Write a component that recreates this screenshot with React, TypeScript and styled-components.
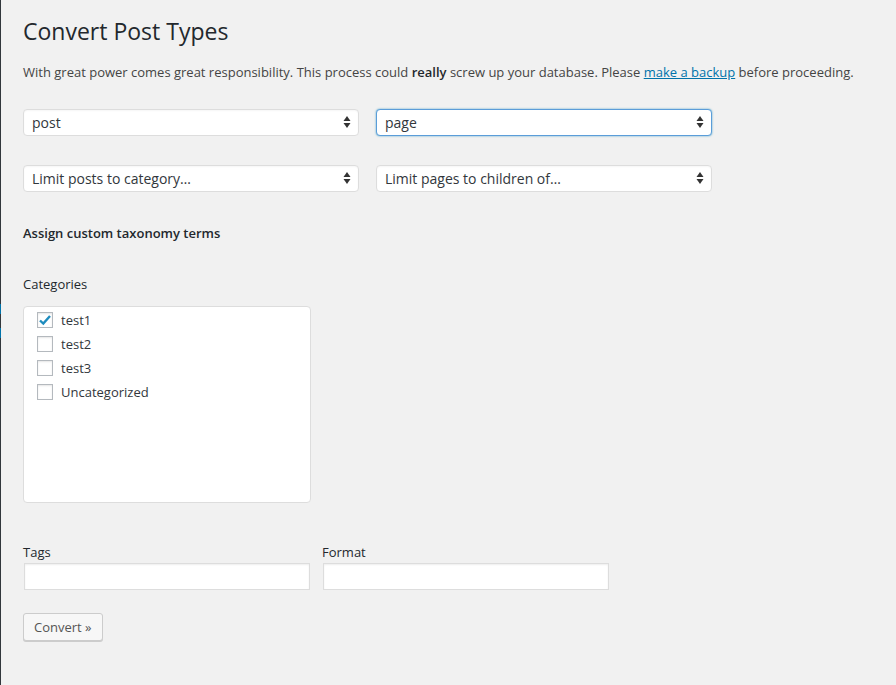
import React from "react";
import styled, { createGlobalStyle } from "styled-components";

const Global = createGlobalStyle`
  html, body { margin: 0; padding: 0; background: #f1f1f1; }
  body { font-family: "Open Sans", "Noto Sans", sans-serif; font-size: 13px; color: #444; }
`;

const Page = styled.div`
  display: flex;
  min-height: 685px;
`;

const Edge = styled.div`
  width: 1px;
  flex: none;
  background: linear-gradient(
    to bottom,
    #32373c 0,
    #32373c 304px,
    #0073aa 304px,
    #0073aa 314px,
    #32373c 314px,
    #32373c 328px,
    #0073aa 328px,
    #0073aa 338px,
    #32373c 338px
  );
`;

const Main = styled.div`
  flex: 1;
  padding: 0 0 0 22px;
`;

const Title = styled.h1`
  margin: 0;
  padding: 17px 0 0;
  font-size: 23px;
  font-weight: 400;
  line-height: 29px;
  color: #23282d;
`;

const Intro = styled.p`
  margin: 17px 0 0;
  font-size: 13px;
  line-height: 1.5;
  color: #444;
  strong { font-weight: 600; color: #23282d; }
  a { color: #0073aa; text-decoration: underline; }
`;

const SelectRow = styled.div<{ $top: number }>`
  display: flex;
  gap: 17px;
  margin-top: ${(p) => p.$top}px;
`;

const SelectBox = styled.div<{ $focus?: boolean }>`
  box-sizing: border-box;
  width: 336px;
  height: 27px;
  background: #fff;
  border: 1px solid ${(p) => (p.$focus ? "#5b9dd9" : "#ddd")};
  box-shadow: ${(p) => (p.$focus ? "0 0 2px rgba(30,140,190,0.8)" : "inset 0 1px 2px rgba(0,0,0,0.04)")};
  border-radius: 4px;
  display: flex;
  align-items: center;
  justify-content: space-between;
  padding: 0 7px 0 8px;
  font-size: 14px;
  color: #32373c;
`;

const Arrows = () => (
  <svg width="8" height="14" viewBox="0 0 8 14">
    <path d="M4 1 L7.5 6 H0.5 Z" fill="#333" />
    <path d="M4 13 L7.5 8 H0.5 Z" fill="#333" />
  </svg>
);

const SectionHead = styled.h3`
  margin: 32px 0 0;
  font-size: 13px;
  font-weight: 600;
  line-height: 18px;
  color: #23282d;
`;

const FieldLabel = styled.div<{ $top: number }>`
  margin-top: ${(p) => p.$top}px;
  font-size: 13px;
  line-height: 18px;
  color: #23282d;
`;

const CatBox = styled.div`
  box-sizing: border-box;
  margin-top: 13px;
  width: 288px;
  height: 197px;
  background: #fff;
  border: 1px solid #ddd;
  border-radius: 4px;
  padding: 5px 0 0 13px;
  display: flex;
  flex-direction: column;
  gap: 8px;
`;

const CheckRow = styled.label`
  display: flex;
  align-items: center;
  gap: 8px;
  height: 16px;
  font-size: 13px;
  color: #32373c;
`;

const Check = styled.span`
  box-sizing: border-box;
  width: 16px;
  height: 16px;
  border: 1px solid #b4b9be;
  background: #fff;
  box-shadow: inset 0 1px 2px rgba(0, 0, 0, 0.1);
  display: flex;
  align-items: center;
  justify-content: center;
`;

const Tick = () => (
  <svg width="14" height="14" viewBox="0 0 14 14">
    <path d="M2 7.5 L5.3 10.6 L12 3" stroke="#1e8cbe" strokeWidth="2.4" fill="none" />
  </svg>
);

const FieldsRow = styled.div`
  display: flex;
  gap: 12px;
  margin-top: 40px;
`;

const Field = styled.div`
  display: flex;
  flex-direction: column;
  gap: 2px;
`;

const TextInput = styled.div`
  box-sizing: border-box;
  margin-left: 1px;
  width: 286px;
  height: 27px;
  background: #fff;
  border: 1px solid #ddd;
  box-shadow: inset 0 1px 2px rgba(0, 0, 0, 0.07);
`;

const Button = styled.button`
  margin-top: 23px;
  box-sizing: border-box;
  height: 28px;
  padding: 0 10px;
  background: #f7f7f7;
  border: 1px solid #ccc;
  border-radius: 3px;
  box-shadow: 0 1px 0 #ccc;
  font-family: inherit;
  font-size: 13px;
  color: #555;
  line-height: 26px;
`;

const cats = [
  { name: "test1", checked: true },
  { name: "test2", checked: false },
  { name: "test3", checked: false },
  { name: "Uncategorized", checked: false },
];

export default function App() {
  return (
    <>
      <Global />
      <Page>
        <Edge />
        <Main>
          <Title>Convert Post Types</Title>
          <Intro>
            With great power comes great responsibility. This process could <strong>really</strong> screw up your
            database. Please <a href="#">make a backup</a> before proceeding.
          </Intro>
          <SelectRow $top={26}>
            <SelectBox>
              <span>post</span>
              <Arrows />
            </SelectBox>
            <SelectBox $focus>
              <span>page</span>
              <Arrows />
            </SelectBox>
          </SelectRow>
          <SelectRow $top={29}>
            <SelectBox>
              <span>Limit posts to category…</span>
              <Arrows />
            </SelectBox>
            <SelectBox>
              <span>Limit pages to children of…</span>
              <Arrows />
            </SelectBox>
          </SelectRow>
          <SectionHead>Assign custom taxonomy terms</SectionHead>
          <FieldLabel $top={33}>Categories</FieldLabel>
          <CatBox>
            {cats.map((c) => (
              <CheckRow key={c.name}>
                <Check>{c.checked && <Tick />}</Check>
                {c.name}
              </CheckRow>
            ))}
          </CatBox>
          <FieldsRow>
            <Field>
              <FieldLabel $top={0}>Tags</FieldLabel>
              <TextInput />
            </Field>
            <Field>
              <FieldLabel $top={0}>Format</FieldLabel>
              <TextInput />
            </Field>
          </FieldsRow>
          <Button>Convert »</Button>
        </Main>
      </Page>
    </>
  );
}
